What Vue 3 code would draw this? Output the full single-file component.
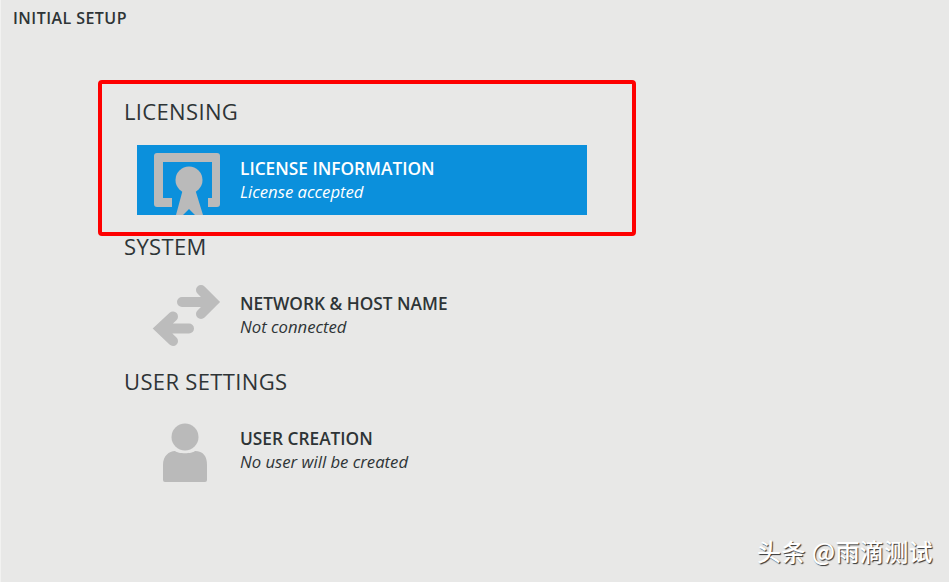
<script setup>
const sections = [
  { heading: 'LICENSING', icon: 'license', title: 'LICENSE INFORMATION', status: 'License accepted', selected: true },
  { heading: 'SYSTEM', icon: 'network', title: 'NETWORK & HOST NAME', status: 'Not connected', selected: false },
  { heading: 'USER SETTINGS', icon: 'user', title: 'USER CREATION', status: 'No user will be created', selected: false },
]
</script>

<template>
  <div class="page">
    <header class="topbar">INITIAL SETUP</header>
    <main class="hub">
      <section v-for="s in sections" :key="s.heading" class="category">
        <h2 class="heading">{{ s.heading }}</h2>
        <div class="spoke" :class="{ selected: s.selected }">
          <svg class="icon" width="100" height="70" viewBox="0 0 100 70">
            <g v-if="s.icon === 'license'" fill="#bababa">
              <path d="M20 8h60a3 3 0 0 1 3 3v48a3 3 0 0 1-3 3H71v-9h4V17H26v36h9v9H20a3 3 0 0 1-3-3V11a3 3 0 0 1 3-3z" />
              <circle cx="52" cy="35" r="13.5" />
              <path d="M46 44h12l8 26H58l-6-6-6 6H39z" />
            </g>
            <g v-else-if="s.icon === 'network'" fill="none" stroke="#bcbcbc" stroke-width="10" stroke-linecap="round" stroke-linejoin="miter">
              <path d="M45 22H76M64 10L76 22 64 34" />
              <path d="M52 48.500H23M36 36.500L23 48.500 36 61" />
            </g>
            <g v-else fill="#bababa">
              <circle cx="48" cy="22" r="13.500" />
              <path d="M26 50c0-9 6-14 12-14 3 3 17 3 20 0 8 0 12 5 12 14v15a2 2 0 0 1-2 2H28a2 2 0 0 1-2-2z" />
            </g>
          </svg>
          <div class="labels">
            <div class="title">{{ s.title }}</div>
            <div class="status">{{ s.status }}</div>
          </div>
        </div>
      </section>
    </main>
    <div class="annotation"></div>
    <div class="watermark">头条 @雨滴测试</div>
  </div>
</template>

<style>
html, body { margin: 0; padding: 0; }
</style>

<style scoped>
.page {
  position: relative;
  width: 949px;
  height: 582px;
  overflow: hidden;
  box-sizing: border-box;
  background: #e8e8e7;
  border-left: 1px solid #f2f2f1;
  font-family: "Open Sans", "Noto Sans", sans-serif;
  color: #2e3436;
}
.topbar {
  padding: 8px 0 0 12px;
  font-size: 16px;
  line-height: 20px;
  font-weight: 600;
  letter-spacing: 0.45px;
}
.hub {
  display: flex;
  flex-direction: column;
  padding: 52px 0 0 123px;
}
.category {
  display: flex;
  flex-direction: column;
}
.heading {
  margin: 0;
  height: 65px;
  box-sizing: border-box;
  padding-top: 17px;
  font-size: 22px;
  line-height: 28px;
  font-weight: 400;
  letter-spacing: 0.35px;
}
.spoke {
  display: flex;
  align-items: center;
  width: 450px;
  height: 70px;
  margin-left: 13px;
}
.spoke.selected {
  background: #0b90dc;
  color: #fff;
}
.icon {
  flex: none;
  display: block;
}
.labels {
  margin-left: 3px;
  display: flex;
  flex-direction: column;
}
.title {
  font-size: 17.3px;
  line-height: 24px;
  font-weight: 600;
}
.status {
  font-size: 16.700px;
  line-height: 22px;
  font-style: italic;
}
.annotation {
  position: absolute;
  left: 97px;
  top: 80px;
  width: 538px;
  height: 156px;
  box-sizing: border-box;
  border: 4px solid #fe0000;
  border-radius: 4px;
}
.watermark {
  position: absolute;
  right: 16px;
  bottom: 16px;
  font-family: "Noto Sans CJK SC", sans-serif;
  font-size: 24px;
  line-height: 30px;
  font-weight: 500;
  letter-spacing: 0.4px;
  color: #fff;
  text-shadow: 1px 1px 1px #333;
}
</style>
